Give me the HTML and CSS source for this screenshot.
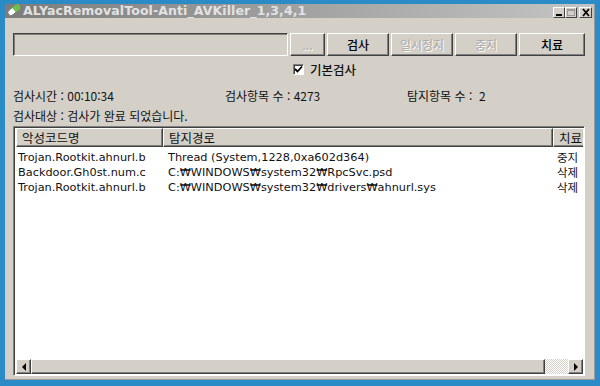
FILE: index.html
```html
<!DOCTYPE html>
<html lang="ko">
<head>
<meta charset="utf-8">
<link rel="stylesheet" href="styles.css">
</head>
<body>
<div class="window">
  <div class="titlebar">
    <svg class="appicon" width="16" height="14" viewBox="0 0 16 14">
      <g transform="rotate(-40 8 7)">
        <rect x="1" y="4" width="14" height="6" rx="3" fill="#ffffff" stroke="#6a6a6a" stroke-width="0.8"/>
        <path d="M8 4 H12 A3 3 0 0 1 12 10 H8 Z" fill="#6cc04a"/>
      </g>
    </svg>
    <span class="title">ALYacRemovalTool-Anti_AVKiller_1,3,4,1</span>
    <div class="wbtns">
      <span class="wbtn"><svg width="10" height="9" viewBox="0 0 10 9"><rect x="2" y="6" width="6" height="2" fill="#000"/></svg></span>
      <span class="wbtn dis"><svg width="10" height="9" viewBox="0 0 10 9"><rect x="1.5" y="1.5" width="7" height="6" fill="none" stroke="#9a9a9a"/><rect x="1" y="1" width="8" height="2" fill="#9a9a9a"/></svg></span>
      <span class="wbtn close"><svg width="10" height="9" viewBox="0 0 10 9"><path d="M2 1 L8 8 M8 1 L2 8" stroke="#000" stroke-width="1.8"/></svg></span>
    </div>
  </div>
  <div class="content">
    <div class="toprow">
      <div class="pathbox"></div>
      <button class="btn small dim">...</button>
      <button class="btn">검사</button>
      <button class="btn dim">일시정지</button>
      <button class="btn dim">중지</button>
      <button class="btn wide">치료</button>
    </div>
    <div class="checkrow">
      <span class="check"><svg width="9" height="9" viewBox="0 0 9 9"><path d="M1 4 L3.5 6.5 L8 1.5" fill="none" stroke="#000" stroke-width="1.8"/></svg></span>
      <span>기본검사</span>
    </div>
    <div class="info">
      <span>검사시간 : 00:10:34</span>
      <span>검사항목 수 : 4273</span>
      <span>탐지항목 수 :&nbsp; 2</span>
    </div>
    <div class="info2">검사대상 : 검사가 완료 되었습니다.</div>
    <div class="listview">
      <div class="lvbody">
        <div class="lvhead">
          <span class="hcell c1">악성코드명</span>
          <span class="hcell c2">탐지경로</span>
          <span class="hcell c3">치료방법</span>
        </div>
        <div class="lvrow"><span class="cell c1">Trojan.Rootkit.ahnurl.b</span><span class="cell c2">Thread (System,1228,0xa602d364)</span><span class="cell c3">중지</span></div>
        <div class="lvrow"><span class="cell c1">Backdoor.Gh0st.num.c</span><span class="cell c2">C:₩WINDOWS₩system32₩RpcSvc.psd</span><span class="cell c3">삭제</span></div>
        <div class="lvrow"><span class="cell c1">Trojan.Rootkit.ahnurl.b</span><span class="cell c2">C:₩WINDOWS₩system32₩drivers₩ahnurl.sys</span><span class="cell c3">삭제</span></div>
      </div>
      <div class="hscroll">
        <span class="sbtn"><svg width="6" height="8" viewBox="0 0 6 8"><path d="M5 0 L1 4 L5 8 Z" fill="#000"/></svg></span>
        <span class="thumb"></span>
        <span class="track"></span>
        <span class="sbtn"><svg width="6" height="8" viewBox="0 0 6 8"><path d="M1 0 L5 4 L1 8 Z" fill="#000"/></svg></span>
      </div>
    </div>
  </div>
</div>
</body>
</html>
```
FILE: styles.css
```css
* { box-sizing: border-box; }
html, body { margin: 0; padding: 0; }
body {
  width: 600px;
  height: 386px;
  background: #2b8bc6;
  padding: 4px 5px 5px 5px;
  font-family: "Noto Sans CJK KR", "Liberation Sans", sans-serif;
  font-size: 12px;
  color: #111;
  overflow: hidden;
}
.window {
  width: 590px;
  height: 376px;
  background: #d4d0c8;
  display: flex;
  flex-direction: column;
  border-right: 1px solid #9a9a9a;
  border-bottom: 1px solid #9a9a9a;
}
.titlebar {
  height: 14px;
  display: flex;
  align-items: center;
  background: linear-gradient(to right, #7c7c7c 0%, #9a9a9a 40%, #c4c4c4 100%);
  padding-left: 1px;
  padding-right: 2px;
}
.appicon { flex: none; margin-top: -2px; }
.title {
  font-family: "DejaVu Sans", "Liberation Sans", sans-serif;
  font-weight: bold;
  font-size: 12.5px;
  color: #e2e2e2;
  margin-left: 1px;
  letter-spacing: 0.1px;
  line-height: 14px;
  white-space: nowrap;
}
.wbtns {
  margin-left: auto;
  display: flex;
  margin-top: 2px;
}
.wbtn {
  width: 12px;
  height: 11px;
  background: #d4d0c8;
  border: 1px solid;
  border-color: #ffffff #404040 #404040 #ffffff;
  display: flex;
  align-items: center;
  justify-content: center;
}
.wbtn.close { margin-left: 2px; width: 13px; }
.content {
  flex: 1;
  padding: 15px 9px 2px 8px;
  display: flex;
  flex-direction: column;
}
.toprow {
  display: flex;
  gap: 2px;
  height: 23px;
}
.pathbox {
  width: 275px;
  border: 1px solid;
  border-color: #404040 #ffffff #ffffff #404040;
  box-shadow: inset 1px 1px 0 #808080;
  background: #d4d0c8;
}
.btn {
  font-family: "Noto Sans CJK KR", sans-serif;
  font-size: 12px;
  width: 62px;
  height: 23px;
  padding: 0;
  background: #d4d0c8;
  color: #000;
  border: 1px solid;
  border-color: #ffffff #404040 #404040 #ffffff;
  box-shadow: inset -1px -1px 0 #808080;
  font-weight: 500;
}
.btn.small { width: 35px; }
.btn.wide { width: 66px; }
.btn.dim { color: #a8a8a8; text-shadow: 1px 1px 0 #fff; font-weight: 400; }
.checkrow {
  display: flex;
  align-items: center;
  gap: 6px;
  margin-top: 7px;
  margin-left: 280px;
  height: 12px;
  font-size: 12.5px;
  font-weight: 500;
}
.check {
  width: 11px;
  height: 11px;
  background: #fff;
  border: 1px solid;
  border-color: #808080 #ffffff #ffffff #808080;
  box-shadow: inset 1px 1px 0 #404040;
  display: flex;
  align-items: center;
  justify-content: center;
}
.info {
  display: grid;
  grid-template-columns: 212px 182px auto;
  margin-top: 12px;
  height: 17px;
  line-height: 17px;
}
.info2 {
  height: 18px;
  line-height: 18px;
  margin-top: 3px;
}
.listview {
  margin-top: 1px;
  height: 250px;
  border: 1px solid;
  border-color: #808080 #ffffff #ffffff #808080;
  box-shadow: inset 1px 1px 0 #404040;
  background: #fff;
  padding: 1px 1px 1px 2px;
  display: flex;
  flex-direction: column;
  overflow: hidden;
}
.lvbody { flex: 1; overflow: hidden; }
.lvhead {
  display: flex;
  height: 19px;
  white-space: nowrap;
}
.hcell {
  flex: none;
  height: 19px;
  line-height: 17px;
  background: #d4d0c8;
  border: 1px solid;
  border-color: #ffffff #404040 #404040 #ffffff;
  box-shadow: inset -1px -1px 0 #808080;
  padding-left: 5px;
  overflow: hidden;
  font-size: 12.5px;
}
.c1 { width: 147px; }
.c2 { width: 390px; }
.c3 { width: 80px; }
.lvrow {
  display: flex;
  height: 15px;
  line-height: 15px;
  white-space: nowrap;
}
.lvhead + .lvrow { margin-top: 3px; }
.cell {
  flex: none;
  height: 15px;
  padding-left: 2px;
  font-family: "DejaVu Sans", "Noto Sans CJK KR", sans-serif;
  font-size: 11.3px;
  overflow: hidden;
}
.cell.c2 { padding-left: 5px; }
.cell.c3 { padding-left: 4px; font-family: "Noto Sans CJK KR", sans-serif; font-size: 11.5px; line-height: 15px; }
.hscroll {
  height: 15px;
  display: flex;
  flex: none;
}
.sbtn {
  width: 15px;
  height: 15px;
  background: #d4d0c8;
  border: 1px solid;
  border-color: #ffffff #404040 #404040 #ffffff;
  box-shadow: inset -1px -1px 0 #808080;
  display: flex;
  align-items: center;
  justify-content: center;
  flex: none;
}
.thumb {
  width: 514px;
  background: #d4d0c8;
  border: 1px solid;
  border-color: #ffffff #404040 #404040 #ffffff;
  box-shadow: inset -1px -1px 0 #808080;
  flex: none;
}
.track {
  flex: 1;
  background: repeating-conic-gradient(#ffffff 0 25%, #d4d0c8 0 50%) 0 0 / 2px 2px;
}
```
